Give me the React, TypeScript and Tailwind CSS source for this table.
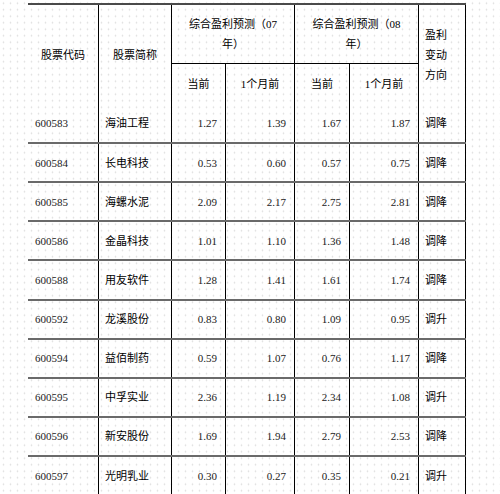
const rows = [
  { code: "600583", name: "海油工程", a: "1.27", b: "1.39", c: "1.67", d: "1.87", dir: "调降" },
  { code: "600584", name: "长电科技", a: "0.53", b: "0.60", c: "0.57", d: "0.75", dir: "调降" },
  { code: "600585", name: "海螺水泥", a: "2.09", b: "2.17", c: "2.75", d: "2.81", dir: "调降" },
  { code: "600586", name: "金晶科技", a: "1.01", b: "1.10", c: "1.36", d: "1.48", dir: "调降" },
  { code: "600588", name: "用友软件", a: "1.28", b: "1.41", c: "1.61", d: "1.74", dir: "调降" },
  { code: "600592", name: "龙溪股份", a: "0.83", b: "0.80", c: "1.09", d: "0.95", dir: "调升" },
  { code: "600594", name: "益佰制药", a: "0.59", b: "1.07", c: "0.76", d: "1.17", dir: "调降" },
  { code: "600595", name: "中孚实业", a: "2.36", b: "1.19", c: "2.34", d: "1.08", dir: "调升" },
  { code: "600596", name: "新安股份", a: "1.69", b: "1.94", c: "2.79", d: "2.53", dir: "调降" },
  { code: "600597", name: "光明乳业", a: "0.30", b: "0.27", c: "0.35", d: "0.21", dir: "调升" },
];

const num = "flex items-center justify-end border-r border-black pr-[8px] text-[#222]";

export default function App() {
  return (
    <div className="w-[500px] h-[494px] overflow-hidden bg-white bg-[radial-gradient(circle,#dedede_0.7px,transparent_1.1px)] bg-[length:7px_6.5px] pt-[3px] font-['Liberation_Serif','Noto_Sans_CJK_SC',serif] text-[11px] leading-[20px] text-black">
      <div className="ml-[28px] w-[438px] border-t-2 border-[#4a4a4a]">
        {/* 表头 */}
        <div className="grid grid-cols-[71px_73px_54px_69px_55px_69px_47px] grid-rows-[59px_40px]">
          <div className="row-span-2 flex items-center justify-center border-r border-black">股票代码</div>
          <div className="row-span-2 flex items-center justify-center border-r border-black">股票简称</div>
          <div className="col-span-2 flex flex-col items-center justify-center border-r border-b border-black">
            <span>综合盈利预测（07</span>
            <span>年）</span>
          </div>
          <div className="col-span-2 flex flex-col items-center justify-center border-r border-b border-black">
            <span>综合盈利预测（08</span>
            <span>年）</span>
          </div>
          <div className="row-span-2 flex flex-col justify-center border-r border-black pl-[6px]">
            <span>盈利</span>
            <span>变动</span>
            <span>方向</span>
          </div>
          <div className="flex items-center justify-center border-r border-black">当前</div>
          <div className="flex items-center justify-center border-r border-black">1个月前</div>
          <div className="flex items-center justify-center border-r border-black">当前</div>
          <div className="flex items-center justify-center border-r border-black">1个月前</div>
        </div>

        {rows.map((r, i) => (
          <div
            key={r.code}
            className={`grid grid-cols-[71px_73px_54px_69px_55px_69px_47px] border-b-2 border-[#6a6a6a] ${i === 0 ? "h-[40px]" : "h-[39.14px]"}`}
          >
            <div className="flex items-center border-r border-black pl-[7px] text-[#222]">{r.code}</div>
            <div className="flex items-center border-r border-black pl-[6px]">{r.name}</div>
            <div className={num}>{r.a}</div>
            <div className={num}>{r.b}</div>
            <div className={num}>{r.c}</div>
            <div className={num}>{r.d}</div>
            <div className="flex items-center border-r border-black pl-[6px]">{r.dir}</div>
          </div>
        ))}
      </div>
    </div>
  );
}
